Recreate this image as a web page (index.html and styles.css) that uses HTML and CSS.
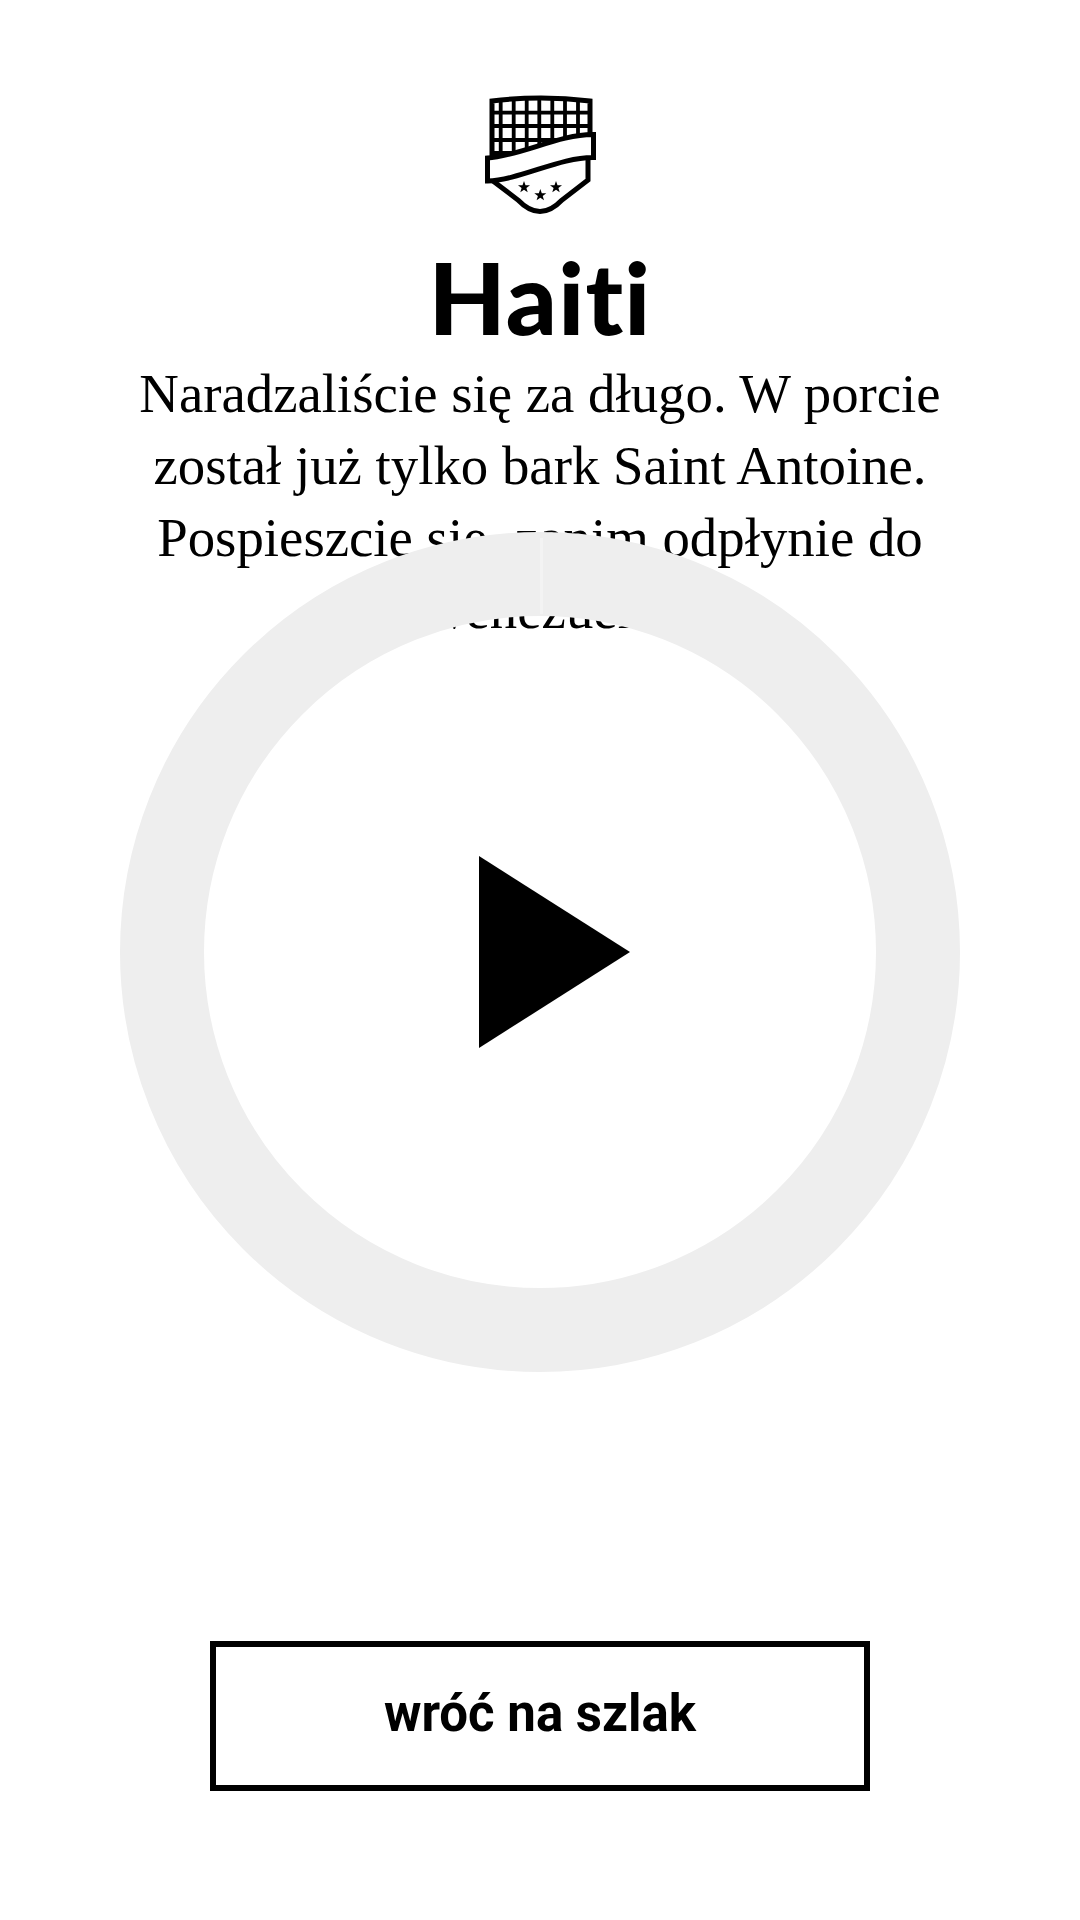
FILE: index.html
```html
<!DOCTYPE html>
<html lang="pl">
<head>
  <meta charset="UTF-8">
  <meta name="viewport" content="width=device-width, initial-scale=1.0">
  <title>Haiti</title>
  <link rel="stylesheet" href="styles.css">
</head>
<body>
  <div class="page">
    <svg class="logo" viewBox="0 0 160 150">
      <!-- net -->
      <path class="net" d="M40.7 20V80M53.7 20V80M66.7 19V80M79.3 19V80M92.3 19V70M105 20V70M118 20V60M32 32.7H130M32 46H130M32 60H130M32 73H70"/>
      <path class="outline" d="M32 80V21Q81 15 130 21V60"/>
      <!-- lower shield -->
      <path class="outline" d="M128 76V100L102 120Q80 143 58 120L33 101"/>
      <!-- banner -->
      <path class="banner" d="M27.5 78C60 76 100 54 133.5 54.5V77.5C100 77 60 100 27.5 101Z"/>
      <polygon class="star" points="64,101 65.5,105.2 70,105.2 66.4,108 67.7,112.3 64,109.8 60.3,112.3 61.6,108 58,105.2 62.5,105.2"/>
      <polygon class="star" points="96,101 97.5,105.2 102,105.2 98.4,108 99.7,112.3 96,109.8 92.3,112.3 93.6,108 90,105.2 94.5,105.2"/>
      <polygon class="star" points="80.3,109 81.8,113.2 86.3,113.2 82.7,116 84,120.3 80.3,117.8 76.6,120.3 77.9,116 74.3,113.2 78.8,113.2"/>
    </svg>
    <h1 class="title">Haiti</h1>
    <p class="story">Naradzaliście się za długo. W porcie został już tylko bark Saint Antoine. Pospieszcie się, zanim odpłynie do Wenezueli.</p>

    <svg class="timer" viewBox="0 0 840 840">
      <circle class="ring" cx="420" cy="420" r="378"/>
      <rect class="seam" x="420" y="6" width="3" height="76"/>
    </svg>
    <svg class="play" viewBox="0 0 151 192">
      <polygon points="0,0 151,96 0,192"/>
    </svg>

    <button class="back">wróć na szlak</button>
  </div>
</body>
</html>
```

FILE: styles.css
```css
body {
  margin: 0;
  background: white;
  color: black;
}

.page {
  position: relative;
  height: 1920px;
  display: flex;
  flex-direction: column;
  align-items: center;
  overflow: hidden;
}

.logo {
  width: 160px;
  height: 150px;
  margin-top: 80px;
  flex-shrink: 0;
}

.net {
  fill: none;
  stroke: black;
  stroke-width: 3.8;
}

.outline {
  fill: none;
  stroke: black;
  stroke-width: 5;
}

.banner {
  fill: white;
  stroke: black;
  stroke-width: 5;
}

.star {
  fill: black;
}

.title {
  margin: 6px 0 0;
  font-family: Lato, sans-serif;
  font-size: 100px;
  font-weight: 900;
  line-height: 120px;
  letter-spacing: 1.2px;
  font-variant-ligatures: none;
}

.story {
  width: 900px;
  margin: 2px 0 0;
  font-family: "Liberation Serif", serif;
  font-size: 54.8px;
  line-height: 72px;
  text-align: center;
}

.timer {
  position: absolute;
  left: 120px;
  top: 532px;
  width: 840px;
  height: 840px;
}

.ring {
  fill: none;
  stroke: #eeeeee;
  stroke-width: 84;
}

.seam {
  fill: #f3f3f3;
}

.play {
  position: absolute;
  left: 479px;
  top: 856px;
  width: 151px;
  height: 192px;
}

.back {
  width: 660px;
  height: 150px;
  margin-top: auto;
  margin-bottom: 129px;
  padding-bottom: 7px;
  background: white;
  border: 6px solid black;
  font-family: Roboto, sans-serif;
  font-size: 51px;
  font-weight: 700;
  color: black;
}
```
